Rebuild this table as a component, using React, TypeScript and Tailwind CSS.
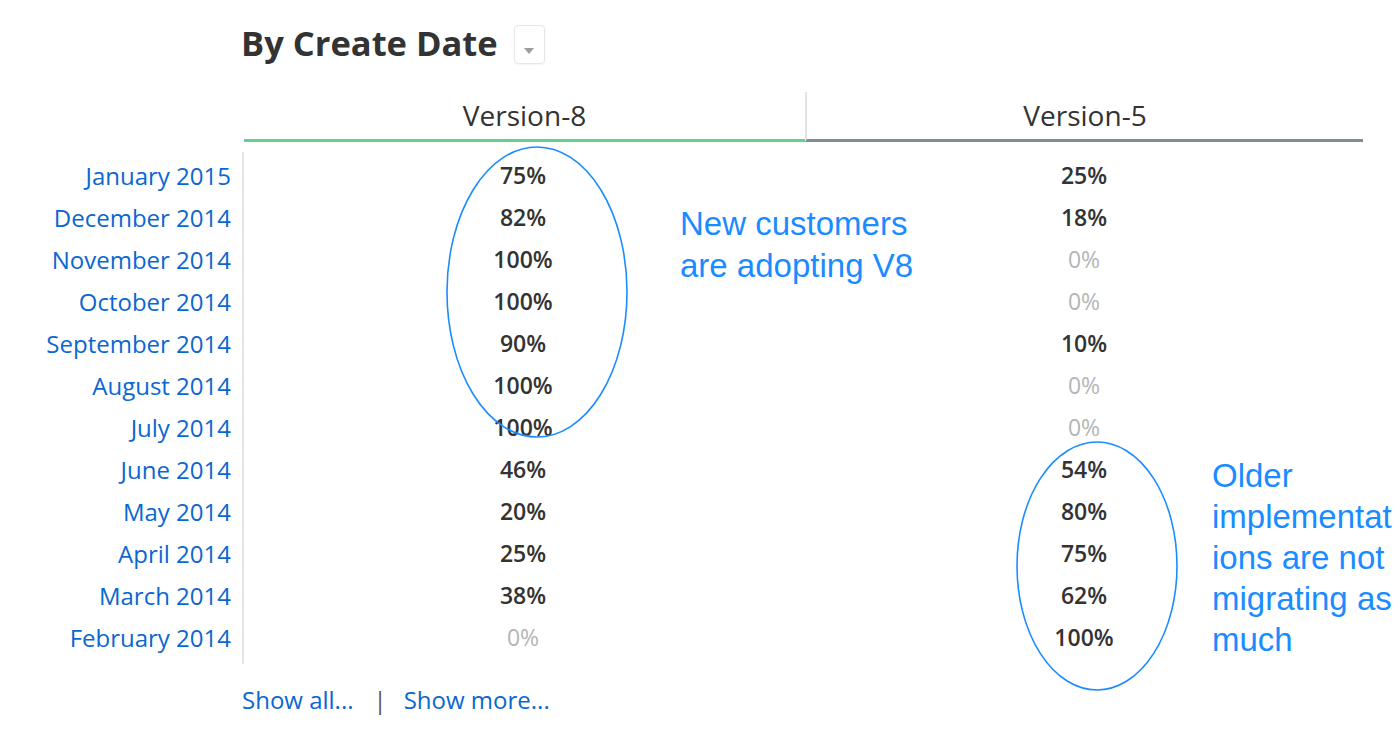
const rows = [
  { label: 'January 2015', v8: '75%', v5: '25%' },
  { label: 'December 2014', v8: '82%', v5: '18%' },
  { label: 'November 2014', v8: '100%', v5: '0%' },
  { label: 'October 2014', v8: '100%', v5: '0%' },
  { label: 'September 2014', v8: '90%', v5: '10%' },
  { label: 'August 2014', v8: '100%', v5: '0%' },
  { label: 'July 2014', v8: '100%', v5: '0%' },
  { label: 'June 2014', v8: '46%', v5: '54%' },
  { label: 'May 2014', v8: '20%', v5: '80%' },
  { label: 'April 2014', v8: '25%', v5: '75%' },
  { label: 'March 2014', v8: '38%', v5: '62%' },
  { label: 'February 2014', v8: '0%', v5: '100%' },
];

const Value = ({ value }: { value: string }) => (
  <span className={value === '0%' ? 'font-normal text-[#b5b5b5]' : 'font-semibold text-[#333]'}>{value}</span>
);

export default function App() {
  return (
    <div className="relative w-[1400px] h-[750px] overflow-hidden bg-white font-['Open_Sans',sans-serif] text-[#333]">
      {/* Title */}
      <div className="flex items-center pt-[21px] pl-[241px]">
        <h1 className="text-[34.5px] leading-[44px] font-bold text-[#333]">By Create Date</h1>
        <button className="ml-[16px] mt-[2px] w-[31px] h-[39px] flex items-start justify-center pt-[22px] rounded-[4px] border border-[#e6e6e6] shadow-[0_1px_2px_rgba(0,0,0,0.05)]">
          <svg width="10" height="6" viewBox="0 0 10 6">
            <path d="M0 0h10L5 6z" fill="#9d9d9d" />
          </svg>
        </button>
      </div>

      {/* Column headers */}
      <div className="mt-[27px] grid grid-cols-[244px_561px_558px]">
        <div />
        <div className="h-[50px] flex items-center justify-center border-b-[3px] border-[#5fd38d] text-[28px] pb-[2px]">
          Version-8
        </div>
        <div className="h-[50px] flex items-center justify-center border-b-[3px] border-l-2 border-l-[#e3e3e3] border-b-[#7f8c9b] text-[28px] pb-[2px]">
          Version-5
        </div>
      </div>

      {/* Rows */}
      <div className="mt-[10px] flex">
        <div className="w-[242px] pt-[3px] pb-[5px] pr-[11px] text-right">
          {rows.map((r) => (
            <div key={r.label} className="h-[42px] leading-[42px] text-[24px] text-[#0b67d0] whitespace-nowrap">
              {r.label}
            </div>
          ))}
        </div>
        <div className="w-[1121px] border-l-2 border-[#e5e5e5] pt-[3px] pb-[5px]">
          {rows.map((r) => (
            <div key={r.label} className="h-[42px] grid grid-cols-[561px_558px] text-[23px] leading-[40px]">
              <div className="text-center pr-[3px]"><Value value={r.v8} /></div>
              <div className="text-center"><Value value={r.v5} /></div>
            </div>
          ))}
        </div>
      </div>

      {/* Footer links */}
      <div className="mt-[21px] pl-[242px] flex items-center text-[24px] leading-[30px]">
        <a className="text-[#0b67d0]">Show all...</a>
        <span className="ml-[20px] mr-[17px] text-[#555]">|</span>
        <a className="text-[#0b67d0]">Show more...</a>
      </div>

      {/* Annotations */}
      <svg className="absolute left-0 top-0 pointer-events-none" width="1400" height="750">
        <ellipse cx="537" cy="292" rx="90" ry="145" fill="none" stroke="#1a8cff" strokeWidth="1.6" />
        <ellipse cx="1097" cy="566" rx="80" ry="124" fill="none" stroke="#1a8cff" strokeWidth="1.6" />
      </svg>
      <div className="absolute left-[680px] top-[203px] text-[33px] leading-[42px] text-[#1a8cff] font-['Liberation_Sans',Arial,sans-serif] whitespace-nowrap">
        New customers
        <br />
        are adopting V8
      </div>
      <div className="absolute left-[1212px] top-[455px] text-[33px] leading-[41px] text-[#1a8cff] font-['Liberation_Sans',Arial,sans-serif] whitespace-nowrap">
        Older
        <br />
        implementat
        <br />
        ions are not
        <br />
        migrating as
        <br />
        much
      </div>
    </div>
  );
}
